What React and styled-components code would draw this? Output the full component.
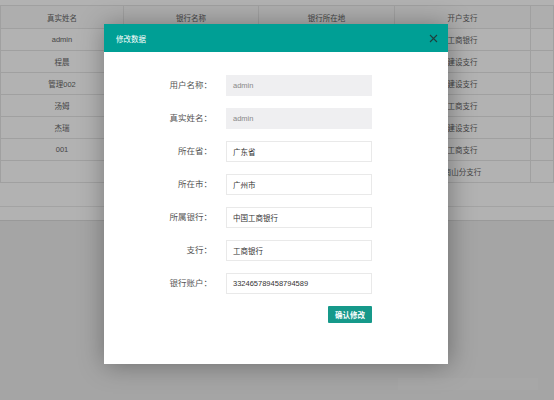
import React from "react";
import styled, { createGlobalStyle } from "styled-components";

const Global = createGlobalStyle`
  html, body { margin: 0; padding: 0; }
  body {
    background: #ececec;
    font-family: "Liberation Sans", Arial, "Noto Sans CJK SC", sans-serif;
    width: 554px; height: 400px; overflow: hidden;
  }
`;

const Page = styled.div`
  position: relative;
  width: 554px;
  height: 400px;
`;

const Content = styled.div`
  background: #fff;
  height: 221px;
  box-sizing: border-box;
  padding-top: 5px;
  border-bottom: 1px solid #dcdcdc;
  display: flex;
  flex-direction: column;
`;

const Table = styled.div`
  display: grid;
  grid-template-columns: 123px 135px 136px 136px 1fr;
  border-top: 1px solid #e6e6e6;
  border-left: 1px solid #e6e6e6;
`;

const Cell = styled.div`
  height: ${p => (p.$head ? 22 : 21)}px;
  border-right: 1px solid #e6e6e6;
  border-bottom: 1px solid #e6e6e6;
  display: flex;
  align-items: center;
  justify-content: center;
  font-size: 7.5px;
  color: #666;
  background: ${p => (p.$head ? "#f9f9f9" : "#fff")};
`;

const Footer = styled.div`
  flex: 1;
  display: flex;
  flex-direction: column;
`;

const FooterBand = styled.div`
  height: 23px;
  border-bottom: 1px solid #eaeaea;
`;

const Pager = styled.div`
  position: absolute;
  left: 398px;
  top: 378px;
  width: 140px;
  height: 12px;
  background: #efefef;
`;

const Overlay = styled.div`
  position: absolute;
  inset: 0;
  background: rgba(0, 0, 0, 0.3);
`;

const Modal = styled.div`
  position: absolute;
  left: 104px;
  top: 24px;
  width: 344px;
  height: 340px;
  background: #fff;
  box-shadow: 1px 1px 24px rgba(0, 0, 0, 0.35);
  display: flex;
  flex-direction: column;
`;

const ModalHead = styled.div`
  height: 28px;
  background: #009f95;
  display: flex;
  align-items: center;
  justify-content: space-between;
  padding: 0 10px 0 12px;
  color: #fff;
  font-size: 7.5px;
`;

const Close = styled.button`
  border: 0;
  background: transparent;
  padding: 0;
  width: 10px;
  height: 10px;
  display: flex;
  align-items: center;
  justify-content: center;
  cursor: pointer;
`;

const Form = styled.div`
  display: grid;
  grid-template-columns: 108px 146px;
  column-gap: 14px;
  row-gap: 12px;
  padding-top: 23px;
`;

const Label = styled.label`
  font-size: 8.5px;
  color: #555;
  text-align: right;
  line-height: 21px;
  height: 21px;
`;

const Input = styled.div`
  height: 21px;
  box-sizing: border-box;
  border: 1px solid ${p => (p.$disabled ? "#efeff1" : "#e9e9e9")};
  background: ${p => (p.$disabled ? "#efeff1" : "#fff")};
  color: ${p => (p.$disabled ? "#888" : "#333")};
  font-size: 7.5px;
  padding-left: 6px;
  display: flex;
  align-items: center;
`;

const Actions = styled.div`
  grid-column: 2;
  display: flex;
  justify-content: flex-end;
`;

const Button = styled.button`
  width: 44px;
  height: 17px;
  border: 0;
  border-radius: 1px;
  background: #16998a;
  color: #fff;
  font-size: 7.5px;
  font-weight: bold;
  font-family: inherit;
  padding: 0;
`;

const head = ["真实姓名", "银行名称", "银行所在地", "开户支行", ""];
const rows = [
  ["admin", "", "", "工商银行", ""],
  ["程晨", "", "", "建设支行", ""],
  ["管理002", "", "", "建设支行", ""],
  ["汤姆", "", "", "工商支行", ""],
  ["杰瑞", "", "", "建设支行", ""],
  ["001", "", "", "工商支行", ""],
  ["", "", "", "南山分支行", ""],
];

const fields = [
  ["用户名称：", "admin", true],
  ["真实姓名：", "admin", true],
  ["所在省：", "广东省", false],
  ["所在市：", "广州市", false],
  ["所属银行：", "中国工商银行", false],
  ["支行：", "工商银行", false],
  ["银行账户：", "332465789458794589", false],
];

export default function App() {
  return (
    <Page>
      <Global />
      <Content>
        <Table>
          {head.map((h, i) => (
            <Cell $head key={"h" + i}>{h}</Cell>
          ))}
          {rows.map((r, ri) =>
            r.map((c, ci) => <Cell key={ri + "-" + ci}>{c}</Cell>)
          )}
        </Table>
        <Footer>
          <FooterBand />
        </Footer>
      </Content>
      <Pager />
      <Overlay />
      <Modal>
        <ModalHead>
          <span>修改数据</span>
          <Close aria-label="close">
            <svg width="9" height="9" viewBox="0 0 9 9">
              <path d="M1 1L8 8M8 1L1 8" stroke="#1f3f3d" strokeWidth="1.1" />
            </svg>
          </Close>
        </ModalHead>
        <Form>
          {fields.map(([l, v, d]) => (
            <React.Fragment key={l}>
              <Label>{l}</Label>
              <Input $disabled={d}>{v}</Input>
            </React.Fragment>
          ))}
          <Actions>
            <Button>确认修改</Button>
          </Actions>
        </Form>
      </Modal>
    </Page>
  );
}
